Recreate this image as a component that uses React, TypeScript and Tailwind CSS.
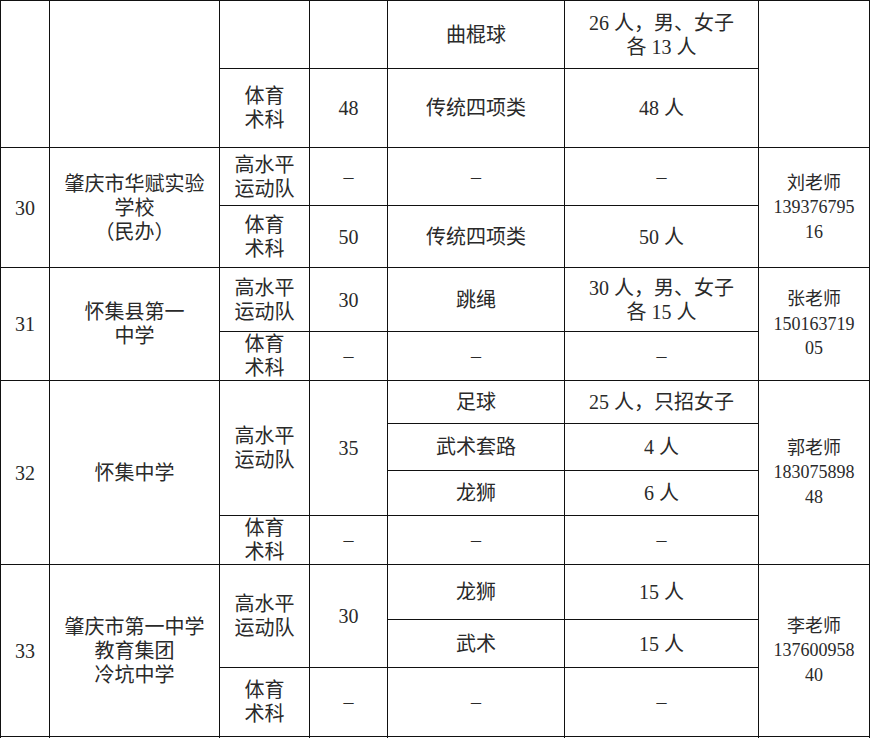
import React from "react";

type Cell = { text?: string; rs?: number; small?: boolean };

const cols = ["w-[49px]", "w-[170px]", "w-[90px]", "w-[78px]", "w-[177px]", "w-[194px]", "w-[111px]"];

const rows: { h: string; cells: Cell[] }[] = [
  {
    h: "h-[68px]",
    cells: [
      { rs: 2 },
      { rs: 2 },
      {},
      {},
      { text: "曲棍球" },
      { text: "26 人，男、女子\n各 13 人" },
      { rs: 2 },
    ],
  },
  {
    h: "h-[79px]",
    cells: [{ text: "体育\n术科" }, { text: "48" }, { text: "传统四项类" }, { text: "48 人" }],
  },
  {
    h: "h-[58px]",
    cells: [
      { text: "30", rs: 2 },
      { text: "肇庆市华赋实验\n学校\n（民办）", rs: 2 },
      { text: "高水平\n运动队" },
      { text: "–" },
      { text: "–" },
      { text: "–" },
      { text: "刘老师\n139376795\n16", rs: 2, small: true },
    ],
  },
  {
    h: "h-[62px]",
    cells: [{ text: "体育\n术科" }, { text: "50" }, { text: "传统四项类" }, { text: "50 人" }],
  },
  {
    h: "h-[64px]",
    cells: [
      { text: "31", rs: 2 },
      { text: "怀集县第一\n中学", rs: 2 },
      { text: "高水平\n运动队" },
      { text: "30" },
      { text: "跳绳" },
      { text: "30 人，男、女子\n各 15 人" },
      { text: "张老师\n150163719\n05", rs: 2, small: true },
    ],
  },
  {
    h: "h-[49px]",
    cells: [{ text: "体育\n术科" }, { text: "–" }, { text: "–" }, { text: "–" }],
  },
  {
    h: "h-[43px]",
    cells: [
      { text: "32", rs: 4 },
      { text: "怀集中学", rs: 4 },
      { text: "高水平\n运动队", rs: 3 },
      { text: "35", rs: 3 },
      { text: "足球" },
      { text: "25 人，只招女子" },
      { text: "郭老师\n183075898\n48", rs: 4, small: true },
    ],
  },
  { h: "h-[47px]", cells: [{ text: "武术套路" }, { text: "4 人" }] },
  { h: "h-[45px]", cells: [{ text: "龙狮" }, { text: "6 人" }] },
  {
    h: "h-[49px]",
    cells: [{ text: "体育\n术科" }, { text: "–" }, { text: "–" }, { text: "–" }],
  },
  {
    h: "h-[55px]",
    cells: [
      { text: "33", rs: 3 },
      { text: "肇庆市第一中学\n教育集团\n冷坑中学", rs: 3 },
      { text: "高水平\n运动队", rs: 2 },
      { text: "30", rs: 2 },
      { text: "龙狮" },
      { text: "15 人" },
      { text: "李老师\n137600958\n40", rs: 3, small: true },
    ],
  },
  { h: "h-[48px]", cells: [{ text: "武术" }, { text: "15 人" }] },
  {
    h: "h-[69px]",
    cells: [{ text: "体育\n术科" }, { text: "–" }, { text: "–" }, { text: "–" }],
  },
  { h: "h-[30px]", cells: [{}, {}, {}, {}, {}, {}, {}] },
];

function Lines({ text }: { text?: string }) {
  if (!text) return null;
  const parts = text.split("\n");
  return (
    <>
      {parts.map((p, i) => (
        <React.Fragment key={i}>
          {p}
          {i < parts.length - 1 && <br />}
        </React.Fragment>
      ))}
    </>
  );
}

export default function App() {
  return (
    <div className="w-[870px] h-[738px] overflow-hidden bg-white">
      <table className="table-fixed border-collapse w-[870px] text-[#2a2a2a] text-[20px] leading-[24px] font-['Liberation_Serif','Noto_Sans_CJK_SC',serif]">
        <colgroup>
          {cols.map((w, i) => (
            <col key={i} className={w} />
          ))}
        </colgroup>
        <tbody>
          {rows.map((r, ri) => (
            <tr key={ri} className={r.h}>
              {r.cells.map((c, ci) => (
                <td
                  key={ci}
                  rowSpan={c.rs}
                  className={`border border-[#111] p-0 text-center align-middle ${
                    c.small ? "text-[18px] leading-[24.5px]" : ""
                  }`}
                >
                  <Lines text={c.text} />
                </td>
              ))}
            </tr>
          ))}
        </tbody>
      </table>
    </div>
  );
}
